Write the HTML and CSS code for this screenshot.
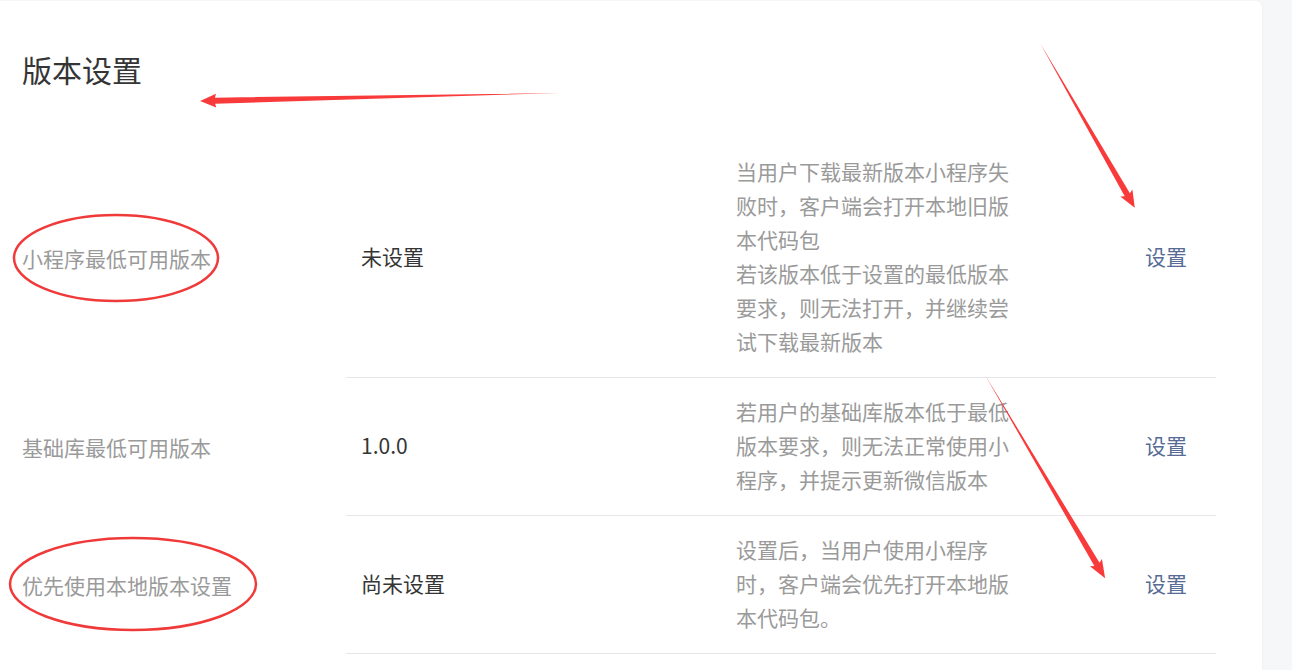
FILE: index.html
```html
<!DOCTYPE html>
<html lang="zh-CN">
<head>
<meta charset="utf-8">
<title>版本设置</title>
<link rel="stylesheet" href="styles.css">
</head>
<body>
<div class="page">
  <section class="card">
    <h2 class="title">版本设置</h2>
    <div class="table">
      <div class="row">
        <div class="label">小程序最低可用版本</div>
        <div class="cells">
          <div class="value">未设置</div>
          <div class="desc">当用户下载最新版本小程序失败时，客户端会打开本地旧版本代码包<br>若该版本低于设置的最低版本要求，则无法打开，并继续尝试下载最新版本</div>
          <div class="action"><a class="link">设置</a></div>
        </div>
      </div>
      <div class="row">
        <div class="label">基础库最低可用版本</div>
        <div class="cells">
          <div class="value">1.0.0</div>
          <div class="desc">若用户的基础库版本低于最低版本要求，则无法正常使用小程序，并提示更新微信版本</div>
          <div class="action"><a class="link">设置</a></div>
        </div>
      </div>
      <div class="row">
        <div class="label">优先使用本地版本设置</div>
        <div class="cells">
          <div class="value">尚未设置</div>
          <div class="desc">设置后，当用户使用小程序时，客户端会优先打开本地版本代码包。</div>
          <div class="action"><a class="link">设置</a></div>
        </div>
      </div>
    </div>
  </section>
  <svg class="annotations" width="1292" height="670" viewBox="0 0 1292 670">
    <g fill="#f93a3a">
      <polygon transform="translate(560 93) rotate(178.73)" points="0,0 345,-3 344,-7 360,0 344,7 345,3"/>
      <polygon transform="translate(1040 43) rotate(60.07)" points="0,0 175,-3 173,-7 190,0 173,7 175,3"/>
      <polygon transform="translate(985 375) rotate(59.41)" points="0,0 220,-3 218,-7 236,0 218,7 220,3"/>
    </g>
    <g fill="none" stroke="#f03a3a" stroke-width="2.5">
      <ellipse cx="116" cy="258" rx="102" ry="43"/>
      <ellipse cx="133" cy="584" rx="123" ry="46"/>
    </g>
  </svg>
</div>
</body>
</html>
```
FILE: styles.css
```css
html, body {
  margin: 0;
  padding: 0;
  background: #f6f7f9;
}
body {
  font-family: "Noto Sans CJK SC", "Noto Sans", "Liberation Sans", sans-serif;
  width: 1292px;
  height: 670px;
  overflow: hidden;
}
.page {
  position: relative;
  width: 1292px;
  height: 670px;
  padding-top: 1px;
  box-sizing: border-box;
  overflow: hidden;
}
.card {
  width: 1262px;
  height: 669px;
  background: #fff;
  border-radius: 0 6px 0 0;
  box-sizing: border-box;
  padding: 46px 46px 0 22px;
  box-shadow: 1px 0 2px rgba(0,0,0,0.03);
  overflow: hidden;
}
.title {
  margin: 0;
  font-size: 30px;
  font-weight: 400;
  line-height: 44px;
  color: #353535;
}
.table {
  margin-top: 47px;
}
.row {
  display: grid;
  grid-template-columns: 324px 1fr;
  align-items: stretch;
}
.label {
  display: flex;
  align-items: center;
  font-size: 21px;
  color: #9a9a9a;
  line-height: 34px;
  padding-bottom: 1px;
}
.cells {
  display: grid;
  grid-template-columns: 375px 409px 86px;
  align-items: center;
  border-bottom: 1px solid #e7e7eb;
  padding: 16px 0 19px;
}
.value, .desc, .action {
  padding-left: 15px;
  font-size: 21px;
  line-height: 34px;
}
.value {
  color: #353535;
}
.desc {
  color: #9a9a9a;
  padding-right: 120px;
}
.link {
  color: #576b95;
  text-decoration: none;
  cursor: pointer;
}
.annotations {
  position: absolute;
  left: 0;
  top: 0;
  pointer-events: none;
}
```
